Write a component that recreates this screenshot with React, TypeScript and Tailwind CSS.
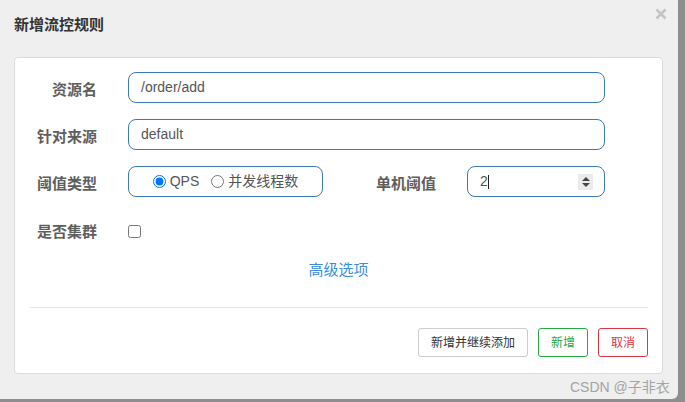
import React from 'react';

const font = "font-['Liberation_Sans','Noto_Sans_CJK_SC',sans-serif]";

function Label({ children, className = '' }: { children: React.ReactNode; className?: string }) {
  return (
    <div className={`text-right text-[15px] leading-[20px] font-bold text-[#5e5e5e] ${className}`}>
      {children}
    </div>
  );
}

function TextInput({ value }: { value: string }) {
  return (
    <div className="w-[477px] h-[31px] border border-[#3a7ab8] rounded-[8px] bg-white pl-[12px] flex items-center text-[14px] text-[#555]">
      {value}
    </div>
  );
}

export default function App() {
  return (
    <div className={`relative w-[685px] h-[402px] bg-[#8e8e8e] overflow-hidden ${font}`}>
      <div className="relative w-[678px] h-[399px] bg-[#efefef] rounded-br-[6px]">
        {/* Header */}
        <div className="h-[57px] pl-[14px] pt-[15px]">
          <h2 className="text-[15px] leading-[20px] font-bold text-[#333]">新增流控规则</h2>
        </div>
        <svg className="absolute left-[655px] top-[8px]" width="12" height="12" viewBox="0 0 12 12">
          <path d="M1.5 1.5 L10.5 10.5 M10.5 1.5 L1.5 10.5" stroke="#c4c4c4" strokeWidth="2.6" />
        </svg>

        {/* Body card */}
        <div className="ml-[14px] w-[649px] h-[317px] bg-white border border-[#dcdcdc] rounded-[4px] pt-[14px]">
          {/* 资源名 */}
          <div className="flex items-start h-[31px]">
            <Label className="w-[82px] mt-[8px]">资源名</Label>
            <div className="ml-[31px]">
              <TextInput value="/order/add" />
            </div>
          </div>

          {/* 针对来源 */}
          <div className="flex items-start h-[31px] mt-[16px]">
            <Label className="w-[82px] mt-[8px]">针对来源</Label>
            <div className="ml-[31px]">
              <TextInput value="default" />
            </div>
          </div>

          {/* 阈值类型 / 单机阈值 */}
          <div className="flex items-start h-[31px] mt-[16px]">
            <Label className="w-[82px] mt-[8px]">阈值类型</Label>
            <div className="ml-[31px] w-[195px] h-[31px] border border-[#3a7ab8] rounded-[8px] flex items-center justify-center text-[14px] text-[#555]">
              <label className="flex items-center">
                <input type="radio" name="grade" defaultChecked className="m-0 w-[13px] h-[13px]" />
                <span className="ml-[4px]">QPS</span>
              </label>
              <label className="flex items-center ml-[12px]">
                <input type="radio" name="grade" className="m-0 w-[13px] h-[13px]" />
                <span className="ml-[4px]">并发线程数</span>
              </label>
            </div>
            <Label className="w-[113px] mt-[8px]">单机阈值</Label>
            <div className="ml-[31px] w-[138px] h-[31px] border border-[#3a7ab8] rounded-[8px] bg-white pl-[12px] pr-[11px] flex items-center text-[14px] text-[#555]">
              <span>2</span>
              <span className="w-px h-[14px] bg-[#222]" />
              <span className="ml-auto w-[15px] h-[16px] bg-[#ebebeb] flex flex-col items-center justify-center gap-[2px]">
                <svg width="8" height="4" viewBox="0 0 8 4">
                  <path d="M0 4 L4 0 L8 4 Z" fill="#444" />
                </svg>
                <svg width="8" height="4" viewBox="0 0 8 4">
                  <path d="M0 0 L4 4 L8 0 Z" fill="#444" />
                </svg>
              </span>
            </div>
          </div>

          {/* 是否集群 */}
          <div className="flex items-center h-[21px] mt-[24px]">
            <Label className="w-[82px]">是否集群</Label>
            <input type="checkbox" className="ml-[31px] m-0 w-[13px] h-[13px]" />
          </div>

          {/* 高级选项 */}
          <div className="mt-[18px] text-center text-[15px] leading-[20px] text-[#3c8dde]">
            <a className="cursor-pointer">高级选项</a>
          </div>

          <div className="mt-[27px] ml-[15px] w-[618px] h-px bg-[#e5e5e5]" />

          {/* Footer buttons */}
          <div className="mt-[20px] flex justify-end gap-[10px] pr-[14px] text-[12px]">
            <button className="h-[29px] px-[12px] border border-[#cccccc] rounded-[3px] bg-white text-[#333]">
              新增并继续添加
            </button>
            <button className="h-[29px] px-[12px] border border-[#28a745] rounded-[3px] bg-white text-[#28a745]">
              新增
            </button>
            <button className="h-[29px] px-[12px] border border-[#dc3545] rounded-[3px] bg-white text-[#dc3545]">
              取消
            </button>
          </div>
        </div>
      </div>

      {/* watermark */}
      <div className="absolute left-[570px] top-[377px] text-[14px] leading-[20px] text-[#a3a3a3]">
        CSDN @子非衣
      </div>
    </div>
  );
}
